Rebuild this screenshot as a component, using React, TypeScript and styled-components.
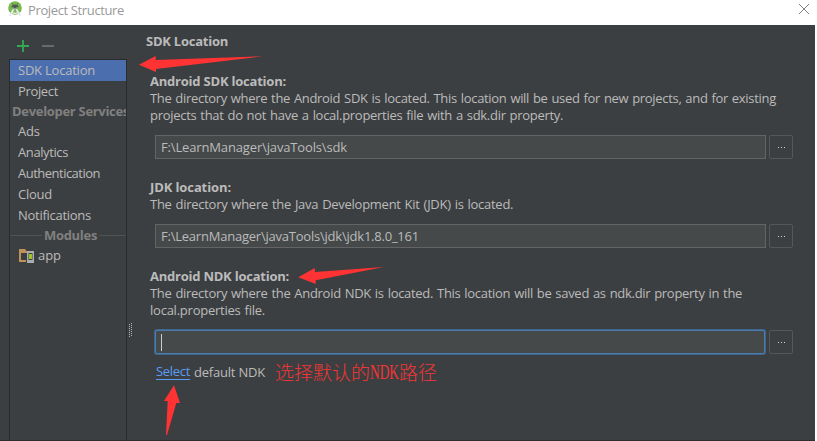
import React from 'react';
import styled, { createGlobalStyle } from 'styled-components';

const GlobalStyle = createGlobalStyle`
  * { box-sizing: border-box; }
  body {
    margin: 0;
    background: #fff;
    font-family: 'Open Sans', 'Noto Sans', sans-serif;
    font-size: 13px;
    color: #bbb;
    overflow: hidden;
  }
`;

const Window = styled.div`
  position: relative;
  width: 815px;
  height: 441px;
  display: flex;
  flex-direction: column;
`;

const TitleBar = styled.header`
  height: 25px;
  flex: none;
  display: flex;
  align-items: flex-start;
  padding-left: 7px;
  background: #fff;
`;

const WindowTitle = styled.div`
  flex: 1;
  margin-left: 5px;
  line-height: 20px;
  color: #999;
  letter-spacing: -0.369px;
`;

const CloseIcon = styled.svg`
  margin: 3px 5px 0 0;
`;

const Body = styled.div`
  flex: 1;
  display: flex;
  background: #3c3f41;
  border-bottom: 1px solid #2d2e30;
`;

const Sidebar = styled.aside`
  width: 127px;
  padding-left: 9px;
  display: flex;
  flex-direction: column;
`;

const Tools = styled.div`
  height: 34px;
  display: flex;
  gap: 13px;
  padding: 15px 0 0 8px;
`;

const Nav = styled.nav`
  flex: 1;
  border: solid #2b2b2d;
  border-width: 1px 1px 0 1px;
  overflow: hidden;
`;

const NavItem = styled.div<{ $active?: boolean; $tracking: number }>`
  height: 21px;
  line-height: 21px;
  padding-left: 8px;
  display: flex;
  align-items: center;
  white-space: nowrap;
  letter-spacing: ${p => p.$tracking}px;
  background: ${p => (p.$active ? '#4b6eaf' : 'transparent')};
`;

const NavHeading = styled.div`
  height: 19px;
  line-height: 19px;
  padding-left: 2px;
  white-space: nowrap;
  font-weight: 700;
  color: #808080;
  letter-spacing: -0.306px;
`;

const NavDivider = styled(NavHeading)`
  height: 19px;
  padding: 0;
  display: flex;
  align-items: center;
  gap: 2px;
  &::before, &::after {
    content: '';
    flex: 0 0 32px;
    height: 1px;
    background: #515355;
  }
  &::after {
    flex: 1;
  }
`;

const ModuleIcon = styled.svg`
  margin: 0 4px 0 1px;
`;

const Splitter = styled.div`
  width: 6px;
  display: flex;
  padding: 298px 0 0 1px;
`;

const Content = styled.main`
  flex: 1;
  padding: 8px 22px 0 13px;
`;

const PageTitle = styled.h1`
  margin: 0 0 24px;
  font-size: 13px;
  line-height: 16px;
  font-weight: 700;
  letter-spacing: -0.244px;
`;

const Section = styled.section<{ $gap: number }>`
  padding-left: 4px;
  margin-bottom: ${p => p.$gap}px;
`;

const SectionTitle = styled.h2<{ $tracking: number }>`
  margin: 0;
  font-size: 13px;
  line-height: 17px;
  font-weight: 700;
  letter-spacing: ${p => p.$tracking}px;
`;

const Line = styled.div<{ $tracking: number }>`
  line-height: 17px;
  white-space: nowrap;
  word-spacing: 0.8px;
  letter-spacing: ${p => p.$tracking}px;
`;

const FieldRow = styled.div<{ $top: number }>`
  display: flex;
  justify-content: space-between;
  width: 638px;
  margin: ${p => p.$top}px 0 0 5px;
`;

const Field = styled.div<{ $focused?: boolean; $tracking?: number }>`
  width: ${p => (p.$focused ? 610 : 611)}px;
  height: 24px;
  padding-left: 5px;
  display: flex;
  align-items: center;
  white-space: pre;
  background: #45494a;
  border: 1px solid ${p => (p.$focused ? '#4b7cae' : '#646464')};
  border-radius: ${p => (p.$focused ? 2 : 0)}px;
  box-shadow: ${p => (p.$focused ? '0 0 0 1px #40658d' : 'none')};
  letter-spacing: ${p => p.$tracking ?? 0}px;
`;

const Caret = styled.span`
  width: 1px;
  height: 17px;
  background: #ccc;
`;

const Browse = styled.button`
  width: 24px;
  height: 24px;
  padding: 0;
  border: 1px solid #555859;
  border-radius: 2px;
  background: #3c3f41;
  display: flex;
  align-items: center;
  justify-content: center;
  gap: 2px;
`;

const Dot = styled.i`
  width: 1px;
  height: 1px;
  background: #d5d5d5;
`;

const SelectRow = styled.div`
  display: flex;
  align-items: center;
  height: 24px;
  margin: 6px 0 0 6px;
  white-space: nowrap;
`;

const Link = styled.a`
  color: #589df6;
  line-height: 15px;
  border-bottom: 1px solid #589df6;
  letter-spacing: -0.312px;
`;

const LinkTail = styled.span`
  margin-left: 4px;
  width: 81px;
  letter-spacing: -0.209px;
`;

const Note = styled.span`
  display: flex;
  align-items: center;
  color: #f23535;
  font: 300 19px/24px 'Noto Sans CJK SC', sans-serif;
`;

const NarrowLatin = styled.span`
  width: 29px;
  font: 20px/24px 'Liberation Serif', serif;
  transform: scaleX(0.67);
  transform-origin: left;
`;

const Annotations = styled.svg`
  position: absolute;
  inset: 0;
  pointer-events: none;
`;

function AndroidStudioLogo() {
  return (
    <svg width="16" height="18" viewBox="0 0 16 18">
      <circle cx="8" cy="8" r="6.8" fill="#78b94a" />
      <path d="M4.3 7.2a3.8 3.6 0 0 1 7.4 0z" fill="#50565a" />
      <path d="M5.2 3.3l1 1.5M10.8 3.3l-1 1.5" stroke="#50565a" strokeWidth=".8" />
      <path d="M7 7h2l.5 3h-3z" fill="#50565a" />
      <path d="M6.8 9L2.5 16M9.2 9l4.3 7" stroke="#e7eaea" strokeWidth="1.8" />
      <path d="M4.5 12Q8 14.8 11.5 12" fill="none" stroke="#eef1ef" strokeWidth="1.4" />
      <circle cx="8" cy="9.2" r="1.2" fill="#a1a7a3" />
    </svg>
  );
}

function BrowseButton() {
  return <Browse aria-label="Browse"><Dot /><Dot /><Dot /></Browse>;
}

export default function App() {
  return (
    <>
      <GlobalStyle />
      <Window>
        <TitleBar>
          <AndroidStudioLogo />
          <WindowTitle>Project Structure</WindowTitle>
          <CloseIcon width="12" height="12" viewBox="0 0 12 12">
            <path d="M1 1l10 10M11 1L1 11" stroke="#808080" strokeWidth="1" />
          </CloseIcon>
        </TitleBar>
        <Body>
          <Sidebar>
            <Tools>
              <svg width="12" height="12" viewBox="0 0 12 12">
                <path d="M6 0v12M0 6h12" stroke="#35a853" strokeWidth="1.8" />
              </svg>
              <svg width="12" height="12" viewBox="0 0 12 12">
                <path d="M0 6h12" stroke="#686a6b" strokeWidth="2" />
              </svg>
            </Tools>
            <Nav>
              <NavItem $active $tracking={-0.222}>SDK Location</NavItem>
              <NavItem $tracking={-0.342}>Project</NavItem>
              <NavHeading>Developer Services</NavHeading>
              <NavItem $tracking={-0.2}>Ads</NavItem>
              <NavItem $tracking={-0.394}>Analytics</NavItem>
              <NavItem $tracking={-0.51}>Authentication</NavItem>
              <NavItem $tracking={-0.25}>Cloud</NavItem>
              <NavItem $tracking={-0.272}>Notifications</NavItem>
              <NavDivider>Modules</NavDivider>
              <NavItem $tracking={-0.044}>
                <ModuleIcon width="15" height="14" viewBox="0 0 15 14">
                  <path d="M0 0h6l1.5 2H13v2H7V4H2v7h5v2H0z" fill="#c09158" />
                  <path d="M8 2h7v12H8z" fill="#a9adb0" />
                  <path d="M9.5 4h4v7h-4z" fill="#3c3f41" />
                  <path d="M10 5h3v5h-3z" fill="#9fc51b" />
                </ModuleIcon>
                app
              </NavItem>
            </Nav>
          </Sidebar>
          <Splitter>
            <svg width="5" height="15" viewBox="0 0 5 15">
              <path d="M1.5 1v14M3.5 0v14" stroke="#b5b5b5" strokeDasharray="1 1" />
            </svg>
          </Splitter>
          <Content>
            <PageTitle>SDK Location</PageTitle>
            <Section $gap={20}>
              <SectionTitle $tracking={-0.215}>Android SDK location:</SectionTitle>
              <Line $tracking={-0.311}>The directory where the Android SDK is located. This location will be used for new projects, and for existing</Line>
              <Line $tracking={-0.287}>projects that do not have a local.properties file with a sdk.dir property.</Line>
              <FieldRow $top={11}>
                <Field $tracking={-0.148}>{'F:\\LearnManager\\javaTools\\sdk'}</Field>
                <BrowseButton />
              </FieldRow>
            </Section>
            <Section $gap={20}>
              <SectionTitle $tracking={-0.108}>JDK location:</SectionTitle>
              <Line $tracking={-0.27}>The directory where the Java Development Kit (JDK) is located.</Line>
              <FieldRow $top={11}>
                <Field $tracking={-0.222}>{'F:\\LearnManager\\javaTools\\jdk\\jdk1.8.0_161'}</Field>
                <BrowseButton />
              </FieldRow>
            </Section>
            <Section $gap={0}>
              <SectionTitle $tracking={-0.235}>Android NDK location:</SectionTitle>
              <Line $tracking={-0.293}>The directory where the Android NDK is located. This location will be saved as ndk.dir property in the</Line>
              <Line $tracking={-0.233}>local.properties file.</Line>
              <FieldRow $top={11}>
                <Field $focused><Caret /></Field>
                <BrowseButton />
              </FieldRow>
              <SelectRow>
                <Link>Select</Link>
                <LinkTail>default NDK</LinkTail>
                <Note>选择默认的<NarrowLatin>NDK</NarrowLatin>路径</Note>
              </SelectRow>
            </Section>
          </Content>
        </Body>
        <Annotations width="815" height="441" viewBox="0 0 815 441" fill="#ff3333">
          <path d="M139 64.7L155.7 56V60L263 56.3L156 69V72z" />
          <path d="M298.3 277.3L314.7 268L315 272L384 267L315.7 280.3V284z" />
          <path d="M174 385.3L180 403H176.3L167 435H166L167.7 401H164z" />
        </Annotations>
      </Window>
    </>
  );
}
